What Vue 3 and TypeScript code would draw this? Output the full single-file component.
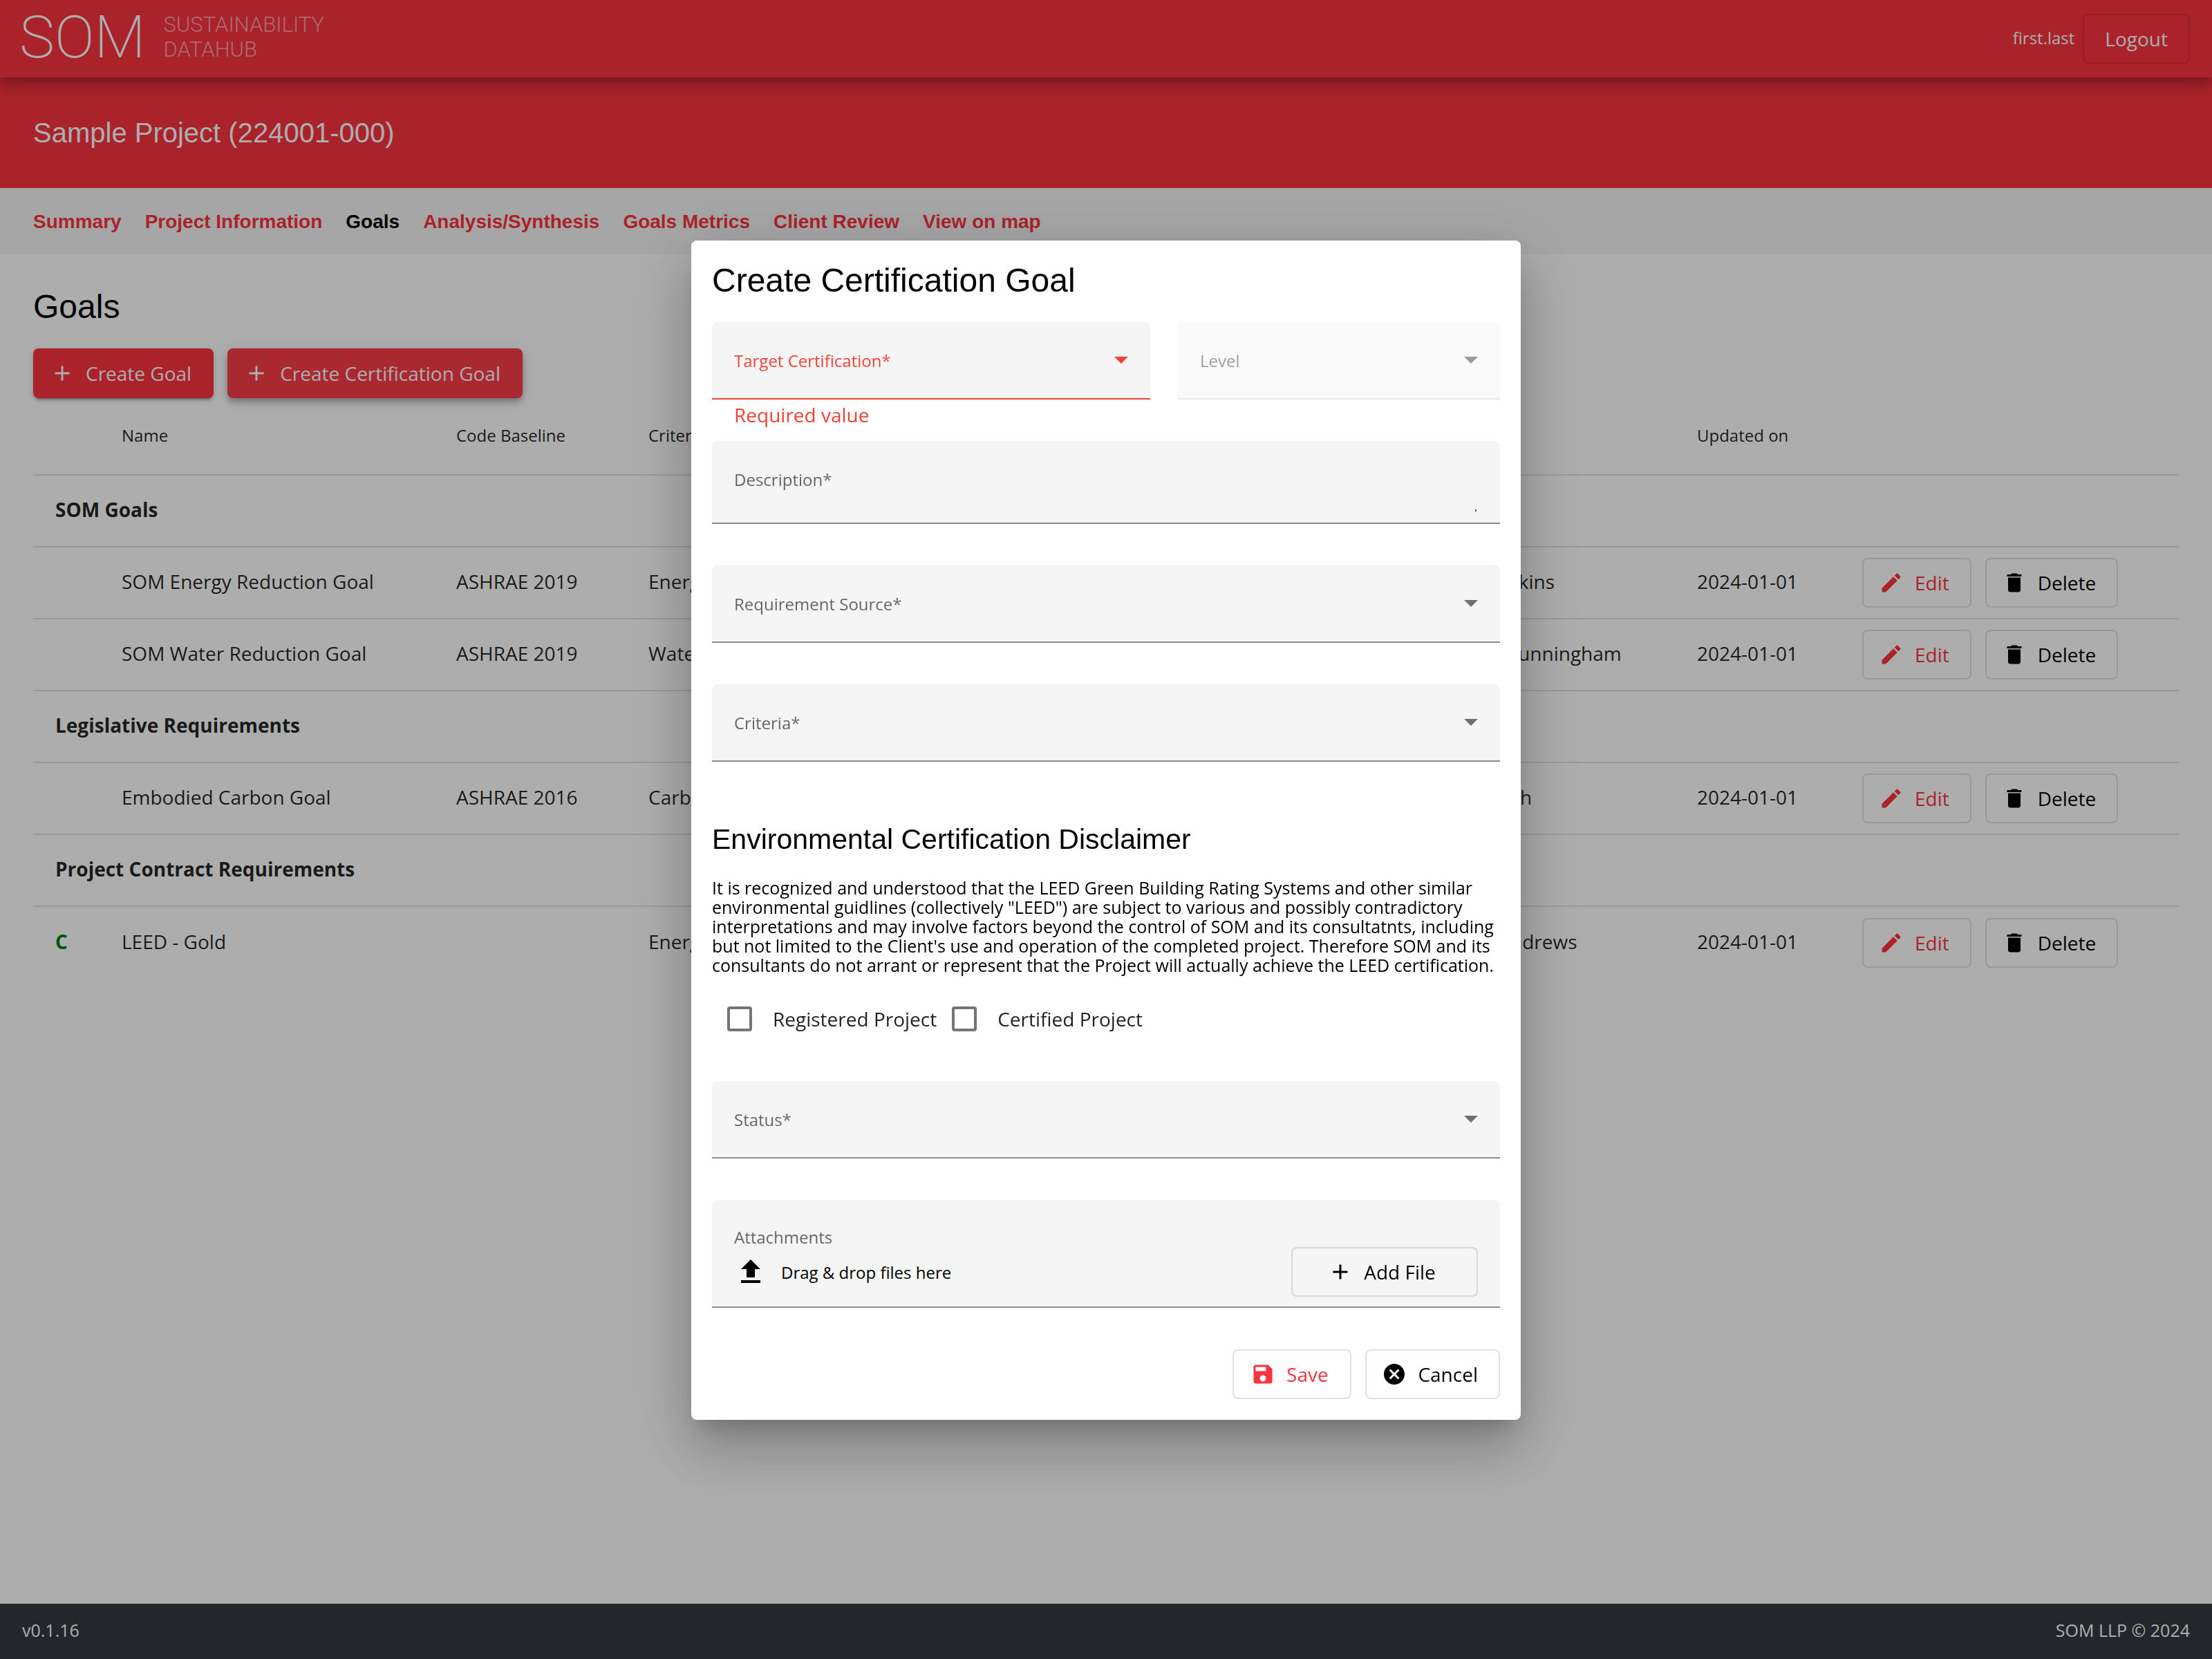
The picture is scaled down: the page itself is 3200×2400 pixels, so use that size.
<script setup lang="ts">
import { ref } from 'vue'

interface Goal {
  mark?: string
  name: string
  baseline: string
  criteria: string
  owner: string
  updated: string
}

interface GoalGroup {
  title: string
  goals: Goal[]
}

const icons = {
  add: 'M19 13h-6v6h-2v-6H5v-2h6V5h2v6h6v2z',
  edit: 'M3 17.25V21h3.75L17.81 9.94l-3.75-3.75L3 17.25zM20.71 7.04c.39-.39.39-1.02 0-1.41l-2.34-2.34c-.39-.39-1.02-.39-1.41 0l-1.83 1.83 3.75 3.75 1.83-1.83z',
  remove: 'M6 19c0 1.1.9 2 2 2h8c1.1 0 2-.9 2-2V7H6v12zM19 4h-3.5l-1-1h-5l-1 1H5v2h14V4z',
  save: 'M17 3H5c-1.11 0-2 .9-2 2v14c0 1.1.89 2 2 2h14c1.1 0 2-.9 2-2V7l-4-4zm-5 16c-1.66 0-3-1.34-3-3s1.34-3 3-3 3 1.34 3 3-1.34 3-3 3zm3-10H5V5h10v4z',
  cancel: 'M12 2C6.47 2 2 6.47 2 12s4.47 10 10 10 10-4.47 10-10S17.53 2 12 2zm5 13.59L15.59 17 12 13.41 8.41 17 7 15.59 10.59 12 7 8.41 8.41 7 12 10.59 15.59 7 17 8.41 13.41 12 17 15.59z',
  upload: 'M5 20h14v-2H5v2zM5 10h4v6h6v-6h4l-7-7-7 7z',
}

const tabs = ['Summary', 'Project Information', 'Goals', 'Analysis/Synthesis', 'Goals Metrics', 'Client Review', 'View on map']
const activeTab = ref('Goals')

const groups: GoalGroup[] = [
  {
    title: 'SOM Goals',
    goals: [
      { name: 'SOM Energy Reduction Goal', baseline: 'ASHRAE 2019', criteria: 'Energy', owner: 'Jim Wilkins', updated: '2024-01-01' },
      { name: 'SOM Water Reduction Goal', baseline: 'ASHRAE 2019', criteria: 'Water', owner: 'Luke Cunningham', updated: '2024-01-01' },
    ],
  },
  {
    title: 'Legislative Requirements',
    goals: [
      { name: 'Embodied Carbon Goal', baseline: 'ASHRAE 2016', criteria: 'Carbon', owner: 'Jo Smith', updated: '2024-01-01' },
    ],
  },
  {
    title: 'Project Contract Requirements',
    goals: [
      { mark: 'C', name: 'LEED - Gold', baseline: '', criteria: 'Energy', owner: 'Ben Andrews', updated: '2024-01-01' },
    ],
  },
]

const description = ref('')
const registered = ref(false)
const certified = ref(false)
</script>

<template>
  <div class="page">
    <header class="topbar">
      <a class="brand" href="#">
        <span class="logo">SOM</span>
        <span class="product">SUSTAINABILITY<br />DATAHUB</span>
      </a>
      <div class="account">
        <span class="user">first.last</span>
        <button class="btn logout" type="button">Logout</button>
      </div>
    </header>

    <div class="project">
      <h1>Sample Project (224001-000)</h1>
    </div>

    <nav class="tabs">
      <a v-for="tab in tabs" :key="tab" href="#" :class="{ active: tab === activeTab }" @click.prevent="activeTab = tab">{{ tab }}</a>
    </nav>

    <main class="content">
      <h2>Goals</h2>
      <div class="actions">
        <button class="btn filled" type="button">
          <svg class="icon" viewBox="0 0 24 24"><path :d="icons.add" /></svg>Create Goal
        </button>
        <button class="btn filled focused" type="button">
          <svg class="icon" viewBox="0 0 24 24"><path :d="icons.add" /></svg>Create Certification Goal
        </button>
      </div>

      <table class="goals">
        <colgroup>
          <col class="c-mark" />
          <col class="c-name" />
          <col class="c-baseline" />
          <col />
          <col class="c-owner" />
          <col class="c-updated" />
          <col class="c-buttons" />
        </colgroup>
        <thead>
          <tr>
            <th></th>
            <th>Name</th>
            <th>Code Baseline</th>
            <th>Criteria</th>
            <th>Owner</th>
            <th>Updated on</th>
            <th></th>
          </tr>
        </thead>
        <tbody v-for="group in groups" :key="group.title">
          <tr>
            <td class="group" colspan="7">{{ group.title }}</td>
          </tr>
          <tr v-for="goal in group.goals" :key="goal.name">
            <td class="mark">{{ goal.mark }}</td>
            <td>{{ goal.name }}</td>
            <td>{{ goal.baseline }}</td>
            <td>{{ goal.criteria }}</td>
            <td>{{ goal.owner }}</td>
            <td>{{ goal.updated }}</td>
            <td class="row-actions">
              <div class="row-buttons">
                <button class="btn primary" type="button">
                  <svg class="icon" viewBox="0 0 24 24"><path :d="icons.edit" /></svg>Edit
                </button>
                <button class="btn" type="button">
                  <svg class="icon" viewBox="0 0 24 24"><path :d="icons.remove" /></svg>Delete
                </button>
              </div>
            </td>
          </tr>
        </tbody>
      </table>
    </main>

    <footer class="footer">
      <span>v0.1.16</span>
      <span>SOM LLP © 2024</span>
    </footer>

    <div class="overlay">
      <form class="dialog" role="dialog" aria-labelledby="dialog-title" @submit.prevent>
        <h2 id="dialog-title" class="dialog-title">Create Certification Goal</h2>

        <div class="pair">
          <div class="field-group wide">
            <div class="field invalid">
              <label for="target">Target Certification*</label>
              <select id="target"><option value=""></option></select>
              <svg class="arrow" viewBox="0 0 20 10"><path d="M0 0h20L10 10z" /></svg>
            </div>
            <p class="error">Required value</p>
          </div>
          <div class="field-group">
            <div class="field disabled">
              <label for="level">Level</label>
              <select id="level" disabled><option value=""></option></select>
              <svg class="arrow" viewBox="0 0 20 10"><path d="M0 0h20L10 10z" /></svg>
            </div>
          </div>
        </div>

        <div class="field area">
          <label for="description">Description*</label>
          <textarea id="description" v-model="description" rows="1"></textarea>
        </div>

        <div class="field">
          <label for="source">Requirement Source*</label>
          <select id="source"><option value=""></option></select>
          <svg class="arrow" viewBox="0 0 20 10"><path d="M0 0h20L10 10z" /></svg>
        </div>

        <div class="field">
          <label for="criteria">Criteria*</label>
          <select id="criteria"><option value=""></option></select>
          <svg class="arrow" viewBox="0 0 20 10"><path d="M0 0h20L10 10z" /></svg>
        </div>

        <h3 class="disclaimer-title">Environmental Certification Disclaimer</h3>
        <p class="disclaimer">
          It is recognized and understood that the LEED Green Building Rating Systems and other similar<br />
          environmental guidlines (collectively "LEED") are subject to various and possibly contradictory<br />
          interpretations and may involve factors beyond the control of SOM and its consultatnts, including<br />
          but not limited to the Client's use and operation of the completed project. Therefore SOM and its<br />
          consultants do not arrant or represent that the Project will actually achieve the LEED certification.
        </p>

        <div class="checks">
          <label><input v-model="registered" type="checkbox" />Registered Project</label>
          <label><input v-model="certified" type="checkbox" />Certified Project</label>
        </div>

        <div class="field">
          <label for="status">Status*</label>
          <select id="status"><option value=""></option></select>
          <svg class="arrow" viewBox="0 0 20 10"><path d="M0 0h20L10 10z" /></svg>
        </div>

        <div class="attachments">
          <span class="attachments-label">Attachments</span>
          <div class="drop">
            <svg class="upload" viewBox="0 0 24 24"><path :d="icons.upload" /></svg>
            <span class="drop-text">Drag &amp; drop files here</span>
            <button class="btn add-file" type="button">
              <svg class="icon" viewBox="0 0 24 24"><path :d="icons.add" /></svg>Add File
            </button>
          </div>
        </div>

        <div class="dialog-actions">
          <button class="btn primary" type="submit">
            <svg class="icon" viewBox="0 0 24 24"><path :d="icons.save" /></svg>Save
          </button>
          <button class="btn" type="button">
            <svg class="icon" viewBox="0 0 24 24"><path :d="icons.cancel" /></svg>Cancel
          </button>
        </div>
      </form>
    </div>
  </div>
</template>

<style>
body {
  margin: 0;
  background: #fff;
}
</style>

<style scoped>
* {
  box-sizing: border-box;
}

.page {
  display: flex;
  flex-direction: column;
  min-height: 100vh;
  font-family: "Open Sans", "Noto Sans", sans-serif;
  font-size: 28px;
  color: #000;
}

h1,
h2,
h3,
p {
  margin: 0;
  font-weight: 400;
}

h1,
h2,
h3,
.tabs {
  font-family: "Liberation Sans", Arial, sans-serif;
}

.topbar {
  position: relative;
  z-index: 1;
  display: flex;
  align-items: center;
  justify-content: space-between;
  height: 112px;
  padding: 0 32px 0 28px;
  background: #fb333f;
  color: #fff;
  box-shadow: 0 6px 10px -2px rgba(0, 0, 0, 0.2), 0 12px 20px 0 rgba(0, 0, 0, 0.14), 0 2px 36px 0 rgba(0, 0, 0, 0.12);
}

.brand {
  display: flex;
  align-items: center;
  gap: 26px;
  padding-bottom: 4px;
  color: #fff;
  text-decoration: none;
  font-family: Roboto, sans-serif;
}

.logo {
  font-size: 86px;
  line-height: 104px;
  font-weight: 200;
}

.product {
  font-size: 31px;
  line-height: 36px;
  font-weight: 300;
  color: rgba(255, 255, 255, 0.55);
}

.account {
  display: flex;
  align-items: center;
  gap: 12px;
}

.user {
  padding-bottom: 4px;
  font-size: 24px;
}

.btn {
  display: inline-flex;
  align-items: center;
  justify-content: center;
  gap: 16px;
  height: 72px;
  padding: 0 30px 0 22px;
  border: 2px solid rgba(0, 0, 0, 0.12);
  border-radius: 8px;
  background: transparent;
  color: #000;
  font-family: inherit;
  font-size: 28px;
  white-space: nowrap;
}

.icon {
  flex: none;
  width: 36px;
  height: 36px;
  fill: currentColor;
}

.logout {
  padding: 0 30px;
  color: #fff;
}

.primary {
  color: #fb333f;
}

.filled {
  border: 0;
  padding: 0 32px 0 24px;
  background: #fb333f;
  color: #fff;
  box-shadow: 0 6px 2px -4px rgba(0, 0, 0, 0.2), 0 4px 4px 0 rgba(0, 0, 0, 0.14), 0 2px 10px 0 rgba(0, 0, 0, 0.12);
}

.focused {
  background: #fb3d48;
  box-shadow: 0 4px 8px -2px rgba(0, 0, 0, 0.2), 0 8px 10px 0 rgba(0, 0, 0, 0.14), 0 2px 20px 0 rgba(0, 0, 0, 0.12);
}

.project {
  display: flex;
  align-items: center;
  height: 160px;
  padding: 0 48px;
  background: #fb333f;
  color: #fff;
}

.project h1 {
  font-size: 40px;
}

.tabs {
  display: flex;
  align-items: center;
  gap: 34px;
  height: 96px;
  padding: 2px 48px 0;
  background: #f5f5f5;
  font-weight: 700;
}

.tabs a {
  color: #fb333f;
  text-decoration: none;
}

.tabs .active {
  color: #000;
}

.content {
  flex: 1;
  padding: 48px 48px 0;
}

.content h2 {
  margin-bottom: 32px;
  font-size: 48px;
  line-height: 56px;
}

.actions {
  display: flex;
  gap: 20px;
}

.goals {
  width: 100%;
  table-layout: fixed;
  border-collapse: separate;
  border-spacing: 0;
  color: rgba(0, 0, 0, 0.87);
}

.c-mark {
  width: 96px;
}

.c-name {
  width: 484px;
}

.c-baseline {
  width: 278px;
}

.c-owner {
  width: 346px;
}

.c-updated {
  width: 239px;
}

.c-buttons {
  width: 490px;
}

th,
td {
  padding: 0 0 4px 32px;
  border-bottom: 2px solid rgba(0, 0, 0, 0.12);
  text-align: left;
  white-space: nowrap;
}

th {
  height: 112px;
  font-size: 24px;
  font-weight: 400;
}

td {
  height: 104px;
}

.row-actions {
  padding-bottom: 0;
}

tbody:last-child tr:last-child td {
  border-bottom: 0;
}

.group {
  font-weight: 700;
}

.mark {
  font-weight: 700;
  color: #008000;
}

.row-buttons {
  display: flex;
  gap: 20px;
}

.footer {
  display: flex;
  align-items: center;
  justify-content: space-between;
  height: 80px;
  padding: 0 32px 4px;
  background: #343a40;
  color: #fff;
  font-size: 25px;
}

.overlay {
  position: fixed;
  inset: 0;
  z-index: 2;
  display: flex;
  align-items: center;
  justify-content: center;
  padding-top: 2px;
  background: rgba(0, 0, 0, 0.32);
}

.dialog {
  display: flex;
  flex-direction: column;
  width: 1200px;
  max-width: 80vw;
  padding: 30px;
  border-radius: 8px;
  background: #fff;
  box-shadow: 0 22px 30px -14px rgba(0, 0, 0, 0.2), 0 48px 76px 6px rgba(0, 0, 0, 0.14), 0 18px 92px 16px rgba(0, 0, 0, 0.12);
}

.dialog-title {
  margin-bottom: 32px;
  font-size: 48px;
  line-height: 56px;
}

.pair {
  display: flex;
  gap: 40px;
}

.field-group {
  flex: 466;
}

.wide {
  flex: 634;
}

.field {
  display: grid;
  grid-template-columns: 1fr 20px;
  align-items: center;
  height: 112px;
  margin-bottom: 60px;
  padding: 0 32px;
  border-bottom: 2px solid #8c8c8c;
  border-radius: 8px 8px 0 0;
  background: #f5f5f5;
}

.field label,
.field select,
.field textarea,
.arrow {
  grid-row: 1;
}

.field label {
  grid-column: 1;
  z-index: 1;
  font-size: 24px;
  color: rgba(0, 0, 0, 0.6);
  pointer-events: none;
}

.field select,
.field textarea {
  grid-column: 1 / 3;
  width: 100%;
  height: 48px;
  padding: 0;
  border: 0;
  appearance: none;
  background: transparent;
  font: inherit;
  outline: 0;
  resize: none;
}

.arrow {
  grid-column: 2;
  width: 20px;
  height: 10px;
  fill: rgba(0, 0, 0, 0.54);
  pointer-events: none;
}

.pair .field {
  margin-bottom: 0;
}

.invalid {
  border-bottom-color: #f44336;
}

.field.invalid label {
  color: #f44336;
}

.invalid .arrow {
  fill: #f44336;
}

.disabled {
  border-bottom-color: #e8e8e8;
  background: #fafafa;
}

.field.disabled label,
.disabled .arrow {
  color: rgba(0, 0, 0, 0.38);
  fill: rgba(0, 0, 0, 0.38);
}

.error {
  height: 60px;
  padding: 0 32px;
  line-height: 44px;
  color: #f44336;
}

.area {
  position: relative;
  height: 120px;
  padding-bottom: 8px;
}

.area::after {
  content: "";
  position: absolute;
  right: 34px;
  bottom: 16px;
  width: 2px;
  height: 3px;
  background: #555;
}

.disclaimer-title {
  margin: 32px 0 36px;
  font-size: 41px;
  line-height: 40px;
}

.disclaimer {
  font-size: 25px;
  line-height: 28px;
  white-space: nowrap;
}

.checks {
  display: flex;
  align-items: center;
  gap: 22px;
  height: 80px;
  margin: 24px 0 50px;
  padding-left: 22px;
  color: rgba(0, 0, 0, 0.87);
}

.checks label {
  display: flex;
  align-items: center;
  gap: 30px;
}

.checks input {
  width: 36px;
  height: 36px;
  margin: 0;
  border: 4px solid #757575;
  border-radius: 4px;
  appearance: none;
}

.attachments {
  padding: 40px 32px 14px;
  border-bottom: 2px solid #8c8c8c;
  border-radius: 8px 8px 0 0;
  background: #f5f5f5;
}

.attachments-label {
  display: block;
  font-size: 24px;
  line-height: 28px;
  color: rgba(0, 0, 0, 0.6);
}

.drop {
  display: flex;
  align-items: center;
  gap: 20px;
}

.upload {
  width: 48px;
  height: 48px;
}

.drop-text {
  flex: 1;
  font-size: 24px;
}

.add-file {
  width: 270px;
}

.dialog-actions {
  display: flex;
  justify-content: flex-end;
  gap: 20px;
  margin-top: 60px;
}

.dialog-actions .btn {
  min-width: 172px;
}
</style>
